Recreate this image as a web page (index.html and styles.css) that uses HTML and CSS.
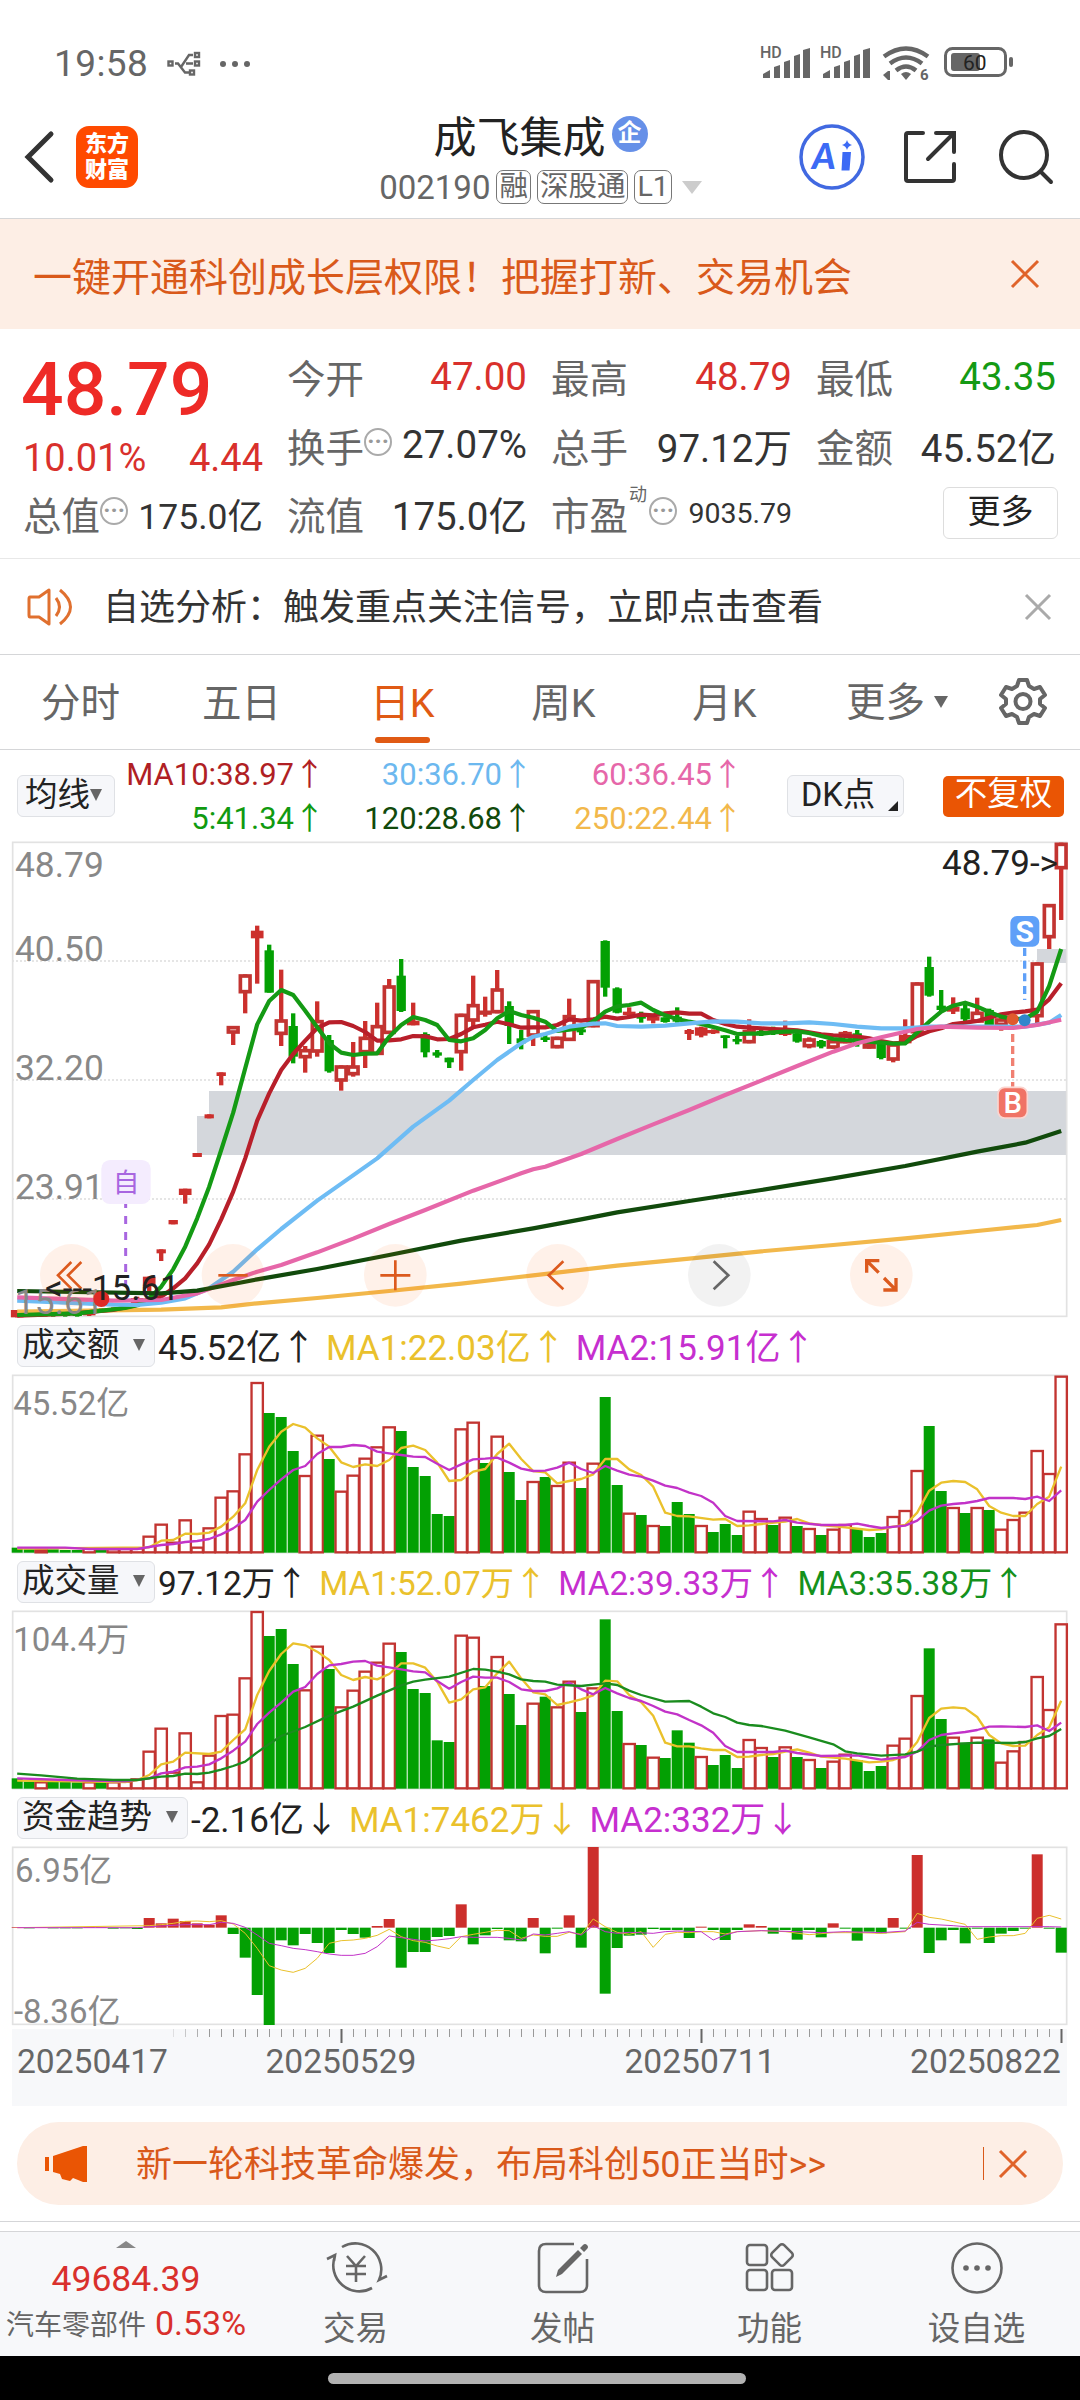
FILE: index.html
```html
<!DOCTYPE html>
<html lang="zh-CN">
<head>
  <meta charset="UTF-8">
  <title>成飞集成 002190</title>
  <link rel="stylesheet" href="styles.css">
</head>
<body>

  <div class="statusbar">
    <span class="time">19:58</span>
    <svg class="usb" width="34" height="26" viewBox="0 0 34 26">
      <g fill="none" stroke="#666" stroke-width="2.4">
        <rect x="1.5" y="10.5" width="4" height="4"/>
        <rect x="28" y="2" width="4" height="4"/>
        <rect x="28" y="10.5" width="4" height="4"/>
        <rect x="23" y="19.500" width="4" height="4"/>
        <path d="M8 12.500h3l7 9h4M14 16l8-12h4M19 12.500h7"/>
      </g>
    </svg>
    <span class="dots"><i></i><i></i><i></i></span>
    <span class="spacer"></span>
    <svg width="282" height="38" viewBox="0 0 282 38">
      <g fill="#666">
        <text class="hd" x="0" y="13">HD</text>
        <path d="M3 33v-4l7-4v8zM14 33V22l6-2v13zM24 33V17l6-2v18zM34 33V11l6-2v24zM43 33V5l7-2v30z"/>
        <text class="hd" x="60" y="13">HD</text>
        <path d="M63 33v-4l7-4v8zM74 33V22l6-2v13zM84 33V17l6-2v18zM94 33V11l6-2v24zM103 33V5l7-2v30z"/>
        <path d="M141 29q5-4 10 0l-5 6z"/>
        <path d="M123 30l5-4v9zM128 26h2v9h-2z"/>
        <text class="six" x="160" y="35">6</text>
        <rect x="191" y="8" width="29" height="18" rx="3"/>
        <rect x="249" y="12" width="4" height="10" rx="2"/>
      </g>
      <g fill="none" stroke="#666">
        <path d="M124 11.500q22-16 44 0M130 18.500q16-12 32 0M136 25.500q10-8 20 0" stroke-width="4.500"/>
        <rect x="185.500" y="3.500" width="60" height="27" rx="7" stroke-width="3"/>
      </g>
      <text class="batt" x="203" y="25">60</text>
    </svg>
  </div>

  <div class="header">
    <svg class="back" width="30" height="52" viewBox="0 0 30 52"><path d="M26 3 3 26 26 49" fill="none" stroke="#333" stroke-width="5" stroke-linecap="round"/></svg>
    <div class="logo">东方<br>财富</div>
    <div class="title">
      <div class="name">成飞集成<span class="badge">企</span></div>
      <div class="code">002190<span class="tag">融</span><span class="tag">深股通</span><span class="tag">L1</span><span class="caret"></span></div>
    </div>
    <svg width="66" height="66" viewBox="0 0 66 66">
      <circle cx="33" cy="33" r="31" fill="none" stroke="#4169e1" stroke-width="3.500"/>
      <text class="ai" x="13" y="45">A</text>
      <path d="M43.500 28h8.500l-1.500 18.500h-8zM48 16q1 4 5 5-4 1-5 5-1-4-5-5 4-1 5-5z" fill="#3c6af5"/>
    </svg>
    <svg class="share" width="54" height="54" viewBox="0 0 54 54">
      <path d="M20 3H5q-2 0-2 2v44q0 2 2 2h44q2 0 2-2V34M33 3h18v19M50 4 25 29" fill="none" stroke="#333" stroke-width="4" stroke-linecap="round"/>
    </svg>
    <svg class="search" width="54" height="54" viewBox="0 0 54 54">
      <circle cx="25" cy="25" r="23" fill="none" stroke="#333" stroke-width="4"/>
      <path d="M42 42l10 10" stroke="#333" stroke-width="4" stroke-linecap="round"/>
    </svg>
  </div>

  <div class="promo">
    <span>一键开通科创成长层权限！把握打新、交易机会</span>
    <svg width="30" height="30" viewBox="0 0 30 30"><path d="M2 2l26 26M28 2 2 28" stroke="#e0632a" stroke-width="3"/></svg>
  </div>

  <div class="quote">
    <div class="price">
      <div class="last">48.79</div>
      <div class="change"><span>10.01%</span><span>4.44</span></div>
    </div>
    <div class="cell"><label>今开</label><b class="up">47.00</b></div>
    <div class="cell"><label>最高</label><b class="up">48.79</b></div>
    <div class="cell"><label>最低</label><b class="down">43.35</b></div>
    <div class="cell"><label>换手<em class="info">···</em></label><b>27.07%</b></div>
    <div class="cell"><label>总手</label><b>97.12万</b></div>
    <div class="cell"><label>金额</label><b>45.52亿</b></div>
    <div class="cell"><label>总值<em class="info">···</em></label><b class="cap">175.0亿</b></div>
    <div class="cell"><label>流值</label><b>175.0亿</b></div>
    <div class="cell"><label>市盈<sup>动</sup><em class="info">···</em></label><b class="small">9035.79</b></div>
    <div class="cell end"><span class="more">更多</span></div>
  </div>

  <div class="notice">
    <svg width="48" height="40" viewBox="0 0 48 40">
      <g fill="none" stroke="#e0702f" stroke-width="3" stroke-linejoin="round">
        <path d="M3 10h9l10-7v34l-10-7H3q-1 0-1-2V12q0-2 1-2z"/>
        <path d="M29 11q7 9 0 18M33 3q21 17 0 34"/>
      </g>
    </svg>
    <span>自选分析：触发重点关注信号，立即点击查看</span>
    <svg width="28" height="28" viewBox="0 0 28 28"><path d="M2 2l24 24M26 2 2 26" stroke="#aaa" stroke-width="3"/></svg>
  </div>

  <div class="tabs">
    <span>分时</span>
    <span>五日</span>
    <span class="active">日K</span>
    <span>周K</span>
    <span>月K</span>
    <span class="drop">更多<i class="tri"></i></span>
    <svg width="48" height="48" viewBox="0 0 48 48">
      <g fill="none" stroke="#666" stroke-width="4" stroke-linejoin="round">
        <path d="M20 3h8l2 6 5 3 6-2 5 8-5 4v5l5 4-5 8-6-2-5 3-2 6h-8l-2-6-5-3-6 2-5-8 5-4v-5l-5-4 5-8 6 2 5-3z"/>
        <circle cx="24" cy="24.500" r="7.500"/>
      </g>
    </svg>
  </div>

  <div class="maline">
    <span class="chip">均线<i class="tri"></i></span>
    <div class="mas">
      <span class="c10">MA10:38.97↑</span><span class="c30">30:36.70↑</span><span class="c60">60:36.45↑</span>
      <span class="c5">5:41.34↑</span><span class="c120">120:28.68↑</span><span class="c250">250:22.44↑</span>
    </div>
    <span class="chip dk">DK点<i class="corner"></i></span>
    <span class="fq">不复权</span>
  </div>

  <svg id="kline" class="panel k" viewBox="0 36 3168 1425"></svg>

  <div class="legend">
    <span class="chip">成交额<i class="tri"></i></span>
    <span>45.52亿↑</span><span class="y">MA1:22.03亿↑</span><span class="m">MA2:15.91亿↑</span>
  </div>
  <svg id="amount" class="panel" viewBox="0 195 3168 534"></svg>

  <div class="legend vol">
    <span class="chip">成交量<i class="tri"></i></span>
    <span>97.12万↑</span><span class="y">MA1:52.07万↑</span><span class="m">MA2:39.33万↑</span><span class="g">MA3:35.38万↑</span>
  </div>
  <svg id="volume" class="panel" viewBox="0 903 3168 534"></svg>

  <div class="legend fund">
    <span class="chip">资金趋势<i class="tri"></i></span>
    <span>-2.16亿↓</span><span class="y">MA1:7462万↓</span><span class="m">MA2:332万↓</span>
  </div>
  <svg id="fund" class="panel" viewBox="0 201 3168 534"></svg>
  <svg id="axis" class="axis" viewBox="0 0 1056 77"></svg>

  <div class="pill">
    <svg width="42" height="38" viewBox="0 0 42 38"><path d="M0 12h4v14H0zM8 11 38 1h4v36h-4l-10-4-3 3-8-2-2-5-7-2z" fill="#ea5504"/></svg>
    <span>新一轮科技革命爆发，布局科创50正当时&gt;&gt;</span>
    <i class="bar"></i>
    <svg width="30" height="30" viewBox="0 0 30 30"><path d="M2 2l26 26M28 2 2 28" stroke="#e0632a" stroke-width="3"/></svg>
  </div>

  <div class="nav">
    <div class="index">
      <i class="uptri"></i>
      <div class="val">49684.39</div>
      <div class="sector">汽车零部件 <b>0.53%</b></div>
    </div>
    <div class="item">
      <svg width="60" height="56" viewBox="0 0 60 56">
        <g fill="none" stroke="#666" stroke-width="2.600">
          <path d="M16 7a26 26 0 0 1 37 33l8-4M46 48A26 26 0 0 1 9 16M1 19l8-4-1 6"/>
          <path d="M21 16l9 10 9-10M20 26h20M20 34h20M30 26v16"/>
        </g>
      </svg>
      交易
    </div>
    <div class="item">
      <svg width="52" height="56" viewBox="0 0 52 56">
        <path d="M37 4H9q-7 0-7 7v34q0 7 7 7h34q7 0 7-7V19" fill="none" stroke="#666" stroke-width="2.600"/>
        <path d="M19 37l2-7 20-20 4 4-20 20zM43 8l3-3q2-2 4 0t0 4l-3 3z" fill="#666"/>
      </svg>
      发帖
    </div>
    <div class="item">
      <svg width="50" height="56" viewBox="0 0 50 56">
        <g fill="none" stroke="#666" stroke-width="2.600">
          <rect x="2" y="5" width="20" height="20" rx="3"/>
          <rect x="2" y="30" width="20" height="20" rx="3"/>
          <rect x="27" y="30" width="20" height="20" rx="3"/>
          <rect x="28.500" y="6.500" width="17" height="17" rx="3" transform="rotate(45 37 15)"/>
        </g>
      </svg>
      功能
    </div>
    <div class="item">
      <svg width="52" height="56" viewBox="0 0 52 56">
        <circle cx="26" cy="28" r="24.500" fill="none" stroke="#666" stroke-width="2.600"/>
        <g fill="#666"><circle cx="15" cy="28" r="2.800"/><circle cx="26" cy="28" r="2.800"/><circle cx="37" cy="28" r="2.800"/></g>
      </svg>
      设自选
    </div>
  </div>
  <div class="homebar"><i></i></div>

  <script src="chart.js"></script>
</body>
</html>
```

FILE: styles.css
```css
* {
  box-sizing: border-box;
}
body {
  margin: 0;
  width: 1080px;
  background: #fff;
  font-family: Roboto, "Noto Sans CJK SC", sans-serif;
  color: #333;
}
svg {
  display: block;
  flex: none;
  overflow: visible;
}
i, em {
  font-style: normal;
}

/* status bar */
.statusbar {
  display: flex;
  align-items: center;
  height: 124px;
  padding: 3px 38px 0 54px;
  color: #666;
}
.time {
  font-size: 37px;
  letter-spacing: 0.4px;
}
.usb {
  margin-left: 19px;
}
.dots {
  display: flex;
  gap: 6px;
  margin-left: 19px;
}
.dots i {
  width: 6px;
  height: 6px;
  border-radius: 50%;
  background: #666;
}
.spacer {
  flex: 1;
}
.hd {
  font-size: 16px;
  font-weight: 500;
}
.six {
  font-size: 15px;
  font-weight: 700;
}
.batt {
  font-size: 21px;
  fill: #222;
}

/* header */
.header {
  display: flex;
  align-items: center;
  height: 95px;
  padding: 0 27px 29px 25px;
  border-bottom: 1px solid #d5d6d8;
}
.logo {
  width: 62px;
  height: 62px;
  margin-left: 21px;
  padding-top: 5px;
  border-radius: 13px;
  background: #ff4a00;
  color: #fff;
  font-size: 22px;
  font-weight: 900;
  line-height: 26px;
  text-align: center;
}
.title {
  flex: 1;
  margin: 9px 0 0 22px;
  padding-left: 122px;
  text-align: center;
}
.name {
  display: flex;
  align-items: center;
  justify-content: center;
  height: 52px;
  font-size: 43px;
  color: #222;
}
.badge {
  width: 36px;
  height: 36px;
  margin-left: 6px;
  border-radius: 50%;
  background: #6690e8;
  color: #fff;
  font-size: 24px;
  font-weight: 700;
  line-height: 35px;
}
.code {
  display: flex;
  align-items: center;
  justify-content: center;
  height: 54px;
  font-size: 33px;
  color: #666;
}
.tag {
  height: 34px;
  margin-left: 6px;
  padding: 0 2px;
  border: 1.5px solid #777;
  border-radius: 7px;
  font-size: 28.500px;
  line-height: 31px;
}
.caret {
  margin-left: 10px;
  border: 10px solid transparent;
  border-top: 13px solid #ccc;
  border-bottom: 0;
}
.ai {
  font-family: Lato, Roboto, sans-serif;
  font-size: 36px;
  font-style: italic;
  font-weight: 900;
  fill: #3c6af5;
}
.share {
  margin-left: 38px;
}
.search {
  margin-left: 42px;
}

.promo {
  display: flex;
  align-items: center;
  justify-content: space-between;
  height: 110px;
  padding: 0 40px 1px 33px;
  background: #fdeee5;
  color: #d9591a;
  font-size: 39px;
}

/* quote */
.quote {
  display: grid;
  grid-template-columns: 240px 240px 241px 240px;
  grid-auto-rows: 68.500px;
  align-content: start;
  column-gap: 24px;
  height: 230px;
  padding: 13px 0 0 23px;
  border-bottom: 1px solid #e8e8e8;
}
.price {
  grid-row: span 2;
  color: #ee2a26;
}
.last {
  height: 93px;
  margin-left: -2px;
  font-size: 75px;
  font-weight: 500;
  line-height: 94px;
}
.change {
  display: flex;
  justify-content: space-between;
  font-size: 38px;
  line-height: 46px;
  color: #d9302c;
}
.cell {
  display: flex;
  align-items: center;
  justify-content: space-between;
  white-space: nowrap;
}
.cell label {
  display: flex;
  align-items: center;
  color: #666;
  font-size: 38.500px;
}
.cell b {
  font-size: 38.500px;
  font-weight: 400;
}
.cell .up {
  color: #d9302c;
}
.cell .down {
  color: #149a14;
}
.cell .cap {
  font-size: 35.500px;
}
.cell .small {
  font-size: 28.500px;
}
.cell sup {
  align-self: flex-start;
  font-size: 18px;
  line-height: 20px;
  margin-left: 1px;
}
.cell sup + .info {
  margin-left: 2px;
}
.info {
  width: 28px;
  height: 28px;
  margin-top: -5px;
  border: 2px solid #aaa;
  border-radius: 50%;
  color: #999;
  font-size: 24px;
  font-weight: 700;
  line-height: 23px;
  text-align: center;
}
.cell.end {
  justify-content: flex-end;
}
.more {
  width: 115px;
  height: 52px;
  margin-right: -2px;
  border: 1px solid #ddd;
  border-radius: 6px;
  color: #222;
  font-size: 33px;
  line-height: 47px;
  text-align: center;
}

.notice {
  display: flex;
  align-items: center;
  height: 96px;
  padding: 0 28px 0 27px;
  border-bottom: 1px solid #d5d6d8;
  font-size: 36px;
}
.notice span {
  flex: 1;
  margin: -6px 0 0 28px;
}

/* period tabs */
.tabs {
  display: grid;
  grid-template-columns: repeat(6, 161px) 1fr;
  align-items: center;
  height: 95px;
  border-bottom: 1px solid #d5d6d8;
  color: #666;
  font-size: 39.500px;
}
.tabs span {
  position: relative;
  height: 92px;
  text-align: center;
  line-height: 95px;
}
.tabs svg {
  margin-left: 33px;
  margin-top: -3px;
}
.tabs .active {
  color: #e05a14;
}
.tabs .active::after {
  content: "";
  position: absolute;
  left: 53px;
  bottom: 5px;
  width: 55px;
  height: 6px;
  border-radius: 3px;
  background: #e05a14;
}
.tabs .drop {
  display: flex;
  align-items: center;
  justify-content: center;
  padding-left: 23px;
}
.tri {
  border: 6px solid transparent;
  border-top: 12px solid #666;
  border-bottom: 0;
}
.drop .tri {
  margin-left: 9px;
  border-width: 12px 7px 0;
}

/* chips and legends */
.chip {
  display: flex;
  align-items: center;
  height: 42px;
  padding: 0 6px 2px 4px;
  border: 1px solid #dfe1e5;
  border-radius: 6px;
  background: #f6f7fa;
  color: #222;
  font-size: 32.500px;
  line-height: 38px;
}
.maline {
  display: flex;
  align-items: center;
  height: 92px;
  padding-left: 17px;
}
.maline .chip {
  width: 98px;
  padding-left: 7px;
}
.mas {
  display: grid;
  grid-template-columns: 210px 208px 210px;
  grid-auto-rows: 44px;
  margin: 2px 1px 0 0;
  line-height: 44px;
  font-size: 31px;
  text-align: right;
}
.c10 { color: #b01f24; }
.c30 { color: #6cb8ef; }
.c60 { color: #e667a9; }
.c5 { color: #109a10; }
.c120 { color: #114a0c; }
.c250 { color: #f2b84b; }
.maline .dk {
  position: relative;
  width: 117px;
  margin-left: 43px;
  padding-left: 13px;
}
.corner {
  position: absolute;
  right: 5px;
  bottom: 5px;
  border: 5px solid #222;
  border-top-color: transparent;
  border-left-color: transparent;
}
.fq {
  width: 121px;
  height: 41px;
  margin-left: 39px;
  border-radius: 5px;
  background: #ea5504;
  color: #fff;
  font-size: 32.500px;
  line-height: 37px;
  text-align: center;
}
.legend {
  display: flex;
  align-items: center;
  height: 58px;
  padding-left: 17px;
  color: #222;
  font-size: 35px;
  white-space: nowrap;
}
.legend > span + span {
  margin: -4px 0 0 10px;
}
.legend .chip {
  width: 138px;
  justify-content: space-between;
  padding-right: 9px;
}
.legend > .chip + span {
  margin-left: 3px;
}
.vol > span + span {
  margin-left: 11px;
  font-size: 33.300px;
}
.fund .chip {
  width: 171px;
}
.y { color: #eac12c; }
.m { color: #c62fcf; }
.g { color: #14911c; }

/* charts */
.panel {
  width: 1056px;
  height: 178px;
  margin-left: 12px;
}
.panel.k {
  height: 475px;
}
.frame {
  fill: none;
  stroke: #e2e2e2;
  stroke-width: 5;
}
.scale {
  font-size: 99px;
  fill: #888;
}
.k .scale {
  font-size: 106px;
}
.tip {
  font-size: 105px;
  fill: #222;
}
.grid {
  stroke: #ddd;
  stroke-width: 4;
  stroke-dasharray: 6 6;
}
.gap {
  fill: #d4d7dc;
}
.up-box {
  fill: #fff;
  stroke: #c23431;
}
.up-fill {
  fill: #cc2f2c;
}
.down-fill {
  fill: #03a003;
}
.ma {
  fill: none;
  stroke-linejoin: round;
}
.axis {
  width: 1056px;
  height: 77px;
  margin: 4px 0 0 12px;
}
.axis text {
  font-size: 33.600px;
  fill: #666;
}

.pill {
  display: flex;
  align-items: center;
  width: 1046px;
  height: 83px;
  margin: 16px 0 16px 17px;
  padding: 0 35px 0 28px;
  border-radius: 42px;
  background: #fdeee5;
  color: #d9591a;
  font-size: 36px;
}
.pill span {
  flex: 1;
  margin: -5px 0 0 49px;
}
.bar {
  width: 1px;
  height: 33px;
  margin-right: 14px;
  background: #d9591a;
}

/* bottom navigation */
.nav {
  display: grid;
  grid-template-columns: 252px repeat(4, 207px);
  height: 135px;
  padding-top: 11px;
  border-top: 1px solid #d5d6d8;
  background: linear-gradient(#fff 9px, #d5d6d8 9px, #d5d6d8 10px, #f7f8fa 10px);
  color: #666;
  font-size: 32.500px;
}
.index {
  display: flex;
  flex-direction: column;
  align-items: center;
  white-space: nowrap;
}
.uptri {
  margin-top: 8px;
  border: 10px solid transparent;
  border-bottom: 7px solid #888;
  border-top: 0;
}
.val {
  margin-top: 10px;
  color: #d9302c;
  font-size: 35.500px;
  line-height: 42px;
}
.sector {
  font-size: 28px;
  line-height: 46px;
}
.sector b {
  margin-left: 2px;
  color: #d9302c;
  font-size: 34px;
  font-weight: 400;
}
.item {
  display: flex;
  flex-direction: column;
  align-items: center;
  padding-top: 7px;
  line-height: 67px;
}
.homebar {
  height: 44px;
  padding-top: 17px;
  background: #000;
}
.homebar i {
  display: block;
  width: 418px;
  height: 11px;
  margin-left: 328px;
  border-radius: 6px;
  background: #b2b2b2;
}
```

FILE: chart.js
```js
// one bar every 12px, svg units are 1/3 px
const STEP = 36, X0 = 15.6, N = 88;
const cx = i => X0 + i * STEP;

// [index, type, high, bodyTop, bodyBottom, low]  h: hollow, r: red, t: narrow red, g: green
const candles = [
  [0,'r',1440,1440,1462,1462],[1,'g',1452,1452,1460,1460],[2,'r',1452,1452,1460,1460],[3,'g',1450,1452,1458,1460],
  [4,'g',1450,1452,1458,1460],[5,'g',1450,1452,1458,1460],[6,'r',1446,1448,1456,1458],[7,'r',1434,1436,1446,1448],
  [8,'r',1432,1434,1444,1446],[9,'r',1428,1430,1438,1440],[10,'r',1400,1404,1420,1424],
  [11,'r',1340,1340,1368,1385],[12,'t',1258,1258,1270,1293],[13,'t',1170,1170,1183,1183],[14,'r',1076,1076,1095,1121],
  [15,'t',969,969,981,981],[16,'t',853,853,865,865],[17,'t',727,727,738,766],[18,'h',588,588,611,645],
  [19,'h',433,433,490,550],[20,'r',287,302,325,461],[21,'g',344,361,488,488],[22,'h',419,568,615,648],
  [23,'g',550,588,680,700],[24,'h',648,657,685,728],[25,'h',514,570,668,680],[26,'g',615,630,724,728],
  [27,'h',706,706,755,782],[28,'h',636,706,736,740],[29,'h',573,620,670,714],[30,'h',518,585,675,675],
  [31,'h',447,466,612,612],[32,'g',387,437,543,546],[33,'r',518,572,586,586],[34,'g',607,612,667,682],
  [35,'g',660,667,677,683],[36,'g',683,683,697,714],[37,'h',551,551,670,722],[38,'h',437,522,575,590],
  [39,'h',500,542,554,560],[40,'h',420,475,550,550],[41,'g',514,528,588,642],[42,'g',600,625,640,658],
  [43,'h',540,540,620,648],[44,'g',615,622,630,636],[45,'h',620,620,655,655],[46,'h',506,555,633,633],
  [47,'g',590,598,607,615],[48,'h',450,450,592,592],[49,'g',331,333,473,500],[50,'g',472,475,548,550],
  [51,'r',532,545,555,560],[52,'g',545,558,566,578],[53,'r',556,560,572,580],[54,'g',562,562,576,578],
  [55,'g',532,560,575,578],[56,'t',597,600,612,630],[57,'r',590,592,617,622],[58,'r',598,600,610,612],
  [59,'g',616,616,624,655],[60,'g',618,627,635,643],[61,'h',568,600,640,640],[62,'g',600,603,614,618],
  [63,'g',590,600,608,615],[64,'r',572,603,615,618],[65,'g',606,610,635,638],[66,'h',622,625,652,655],
  [67,'g',630,633,650,655],[68,'h',628,630,656,656],[69,'h',603,606,640,640],[70,'g',600,610,640,650],
  [71,'h',632,640,656,656],[72,'g',640,640,684,688],[73,'h',640,640,692,697],[74,'r',568,615,640,640],
  [75,'h',457,457,610,610],[76,'g',380,411,497,500],[77,'g',480,527,540,545],[78,'r',502,530,545,552],
  [79,'g',525,535,568,573],[80,'h',503,545,578,578],[81,'g',536,540,587,590],[82,'h',560,565,588,602],
  [85,'h',397,397,562,580],[86,'h',222,222,325,357],[87,'h',38,38,118,270]
];

const kma = [
  ['#f2b84b', '0,1445 12,1439 17,1432 20,1420 25,1404 31,1383 37,1361 43,1336 50,1307 56,1286 62,1264 68,1245 74,1225 80,1203 85,1185 87,1170'],
  ['#b81f2a', '0,1457 4,1452 8,1440 10,1425 11,1408 12,1400 13,1375 14,1345 15,1300 16,1243 17,1168 18,1085 19,985 20,872 21,790 22,720 23,672 24,632 25,594 26,577 27,576 28,588 29,606 30,632 31,631 32,628 33,618 34,619 35,628 36,627 37,612 38,592 39,584 40,575 41,583 42,593 43,592 44,592 45,585 46,568 47,572 48,568 49,560 50,566 51,561 52,554 53,556 54,550 55,547 56,551 57,551 58,570 59,582 60,590 61,593 62,595 63,597 64,599 65,601 66,607 67,613 68,616 69,618 70,620 71,625 72,633 73,640 74,638 75,618 76,604 77,595 78,582 79,578 80,573 81,563 82,553 83,548 84,544 85,539 86,508 87,460'],
  ['#149a14', '0,1455 5,1450 8,1438 9,1434 10,1426 11,1405 12,1370 13,1318 14,1250 15,1165 16,1070 17,960 18,848 19,715 20,583 21,513 22,480 23,495 24,542 25,592 26,640 27,668 28,675 29,671 30,670 31,620 32,585 33,561 34,570 35,585 36,630 37,634 38,625 39,600 40,565 41,543 42,555 43,563 44,575 45,603 46,599 47,594 48,574 49,545 50,529 51,525 52,518 53,540 54,556 55,567 56,575 57,582 58,591 59,601 60,612 61,611 62,611 63,607 64,605 65,604 66,609 67,618 68,627 69,630 70,632 71,635 72,638 73,641 74,640 75,608 76,575 77,545 78,527 79,518 80,530 81,546 82,560 83,567 84,566 85,545 86,468 87,357'],
  ['#6ebcf4', '0,1412 8,1424 10,1425 12,1418 14,1405 16,1375 18,1325 20,1258 22,1197 25,1112 30,985 33,890 36,812 38,750 40,690 42,640 43,620 44,612 46,590 48,581 49,580 50,588 52,590 54,587 56,580 58,574 60,575 62,580 64,580 66,577 68,582 70,590 72,595 74,595 76,590 82,590 84,590 86,578 87,555'],
  ['#e667a9', '0,1402 8,1412 12,1410 15,1390 18,1350 20,1325 22,1305 25,1267 28,1226 31,1182 34,1140 38,1082 42,1030 43,1018 44,1010 47,972 50,927 53,883 56,840 59,795 62,752 65,708 68,665 70,640 72,622 75,597 77,590 80,593 83,594 85,585 87,569'],
  ['#114a0c', '0,1383 12,1390 15,1382 18,1362 20,1348 25,1317 31,1275 37,1232 43,1195 47,1168 50,1147 56,1113 62,1080 68,1045 74,1008 80,965 84,938 87,903']
];

const colors = 'ggrgggrgrrrrrrrrrrrrrgggrrgrrrrrggggg' + 'rrgrggrgrrgrggrgrgggrggg' + 'rrgrgrgrrgggrrrggrgrgrrrrrr';

const amount = [713,718,718,718,720,720,712,720,715,714,712,677,641,695,628,710,652,560,541,430,216,309,321,423,495,374,447,542,494,443,409,349,363,471,498,612,618,355,335,459,377,486,570,513,501,525,455,534,458,261,525,608,615,645,648,576,612,645,666,642,675,602,624,645,620,648,654,675,656,642,655,681,669,618,600,480,348,543,591,609,591,600,656,627,605,420,489,197];
const volume = [1405,1415,1414,1415,1415,1417,1414,1416,1414,1412,1405,1322,1253,1385,1267,1414,1334,1215,1211,1102,903,978,957,1062,1138,1007,1077,1189,1139,1082,1055,998,1026,1137,1149,1291,1296,974,980,1128,1038,1152,1245,1178,1160,1189,1112,1206,1132,928,1203,1299,1305,1340,1344,1261,1298,1338,1365,1335,1374,1287,1311,1341,1309,1341,1347,1374,1352,1331,1350,1383,1368,1304,1283,1155,1015,1227,1280,1298,1280,1288,1355,1321,1293,1098,1197,940];
const fund = [441,445,441,445,445,445,441,441,446,445,447,414,430,416,423,430,434,406,462,533,645,735,481,496,462,489,519,450,462,473,438,417,563,516,516,471,468,373,493,466,447,481,484,414,520,446,406,503,201,641,504,467,464,447,450,450,474,440,450,480,450,433,438,461,450,479,450,472,430,446,482,455,460,414,446,225,519,481,450,490,446,489,461,453,446,223,446,518];

const ama = [
  ['#eac12c', '0,716 11,712 12,692 13,690 14,671 15,672 16,668 17,650 18,620 19,580 20,480 21,410 22,365 23,342 24,353 25,385 26,410 27,457 28,471 29,463 30,468 31,450 32,414 33,407 34,420 35,458 36,513 37,510 38,485 39,477 40,432 41,401 42,447 43,483 44,487 45,520 46,513 47,507 48,493 49,447 50,447 51,478 52,495 53,530 54,608 55,618 56,619 58,629 59,627 60,648 61,646 62,642 64,635 65,627 66,640 67,645 69,652 71,660 72,658 73,650 74,645 75,608 76,542 77,518 78,513 79,516 80,538 81,588 82,608 83,618 84,618 85,582 86,560 87,470'],
  ['#c233c8', '0,713 4,713 6,717 10,717 12,705 13,702 14,696 15,693 16,687 17,673 18,655 19,630 20,575 21,540 22,508 23,480 24,468 25,432 26,411 27,411 28,405 29,408 30,425 31,430 32,435 33,440 34,441 35,461 36,480 37,463 38,448 39,446 40,443 41,458 42,476 43,483 44,482 45,473 46,458 47,477 48,489 49,468 50,482 51,494 52,500 53,512 54,527 55,534 56,548 57,558 58,578 59,618 60,633 63,634 64,630 65,638 67,645 69,645 70,641 71,648 72,654 74,647 75,632 76,602 77,587 78,582 79,579 80,573 81,564 83,564 84,567 85,560 86,573 87,541']
];
const vma = [
  ['#eac12c', '0,1412 9,1416 10,1410 11,1395 12,1363 13,1355 14,1328 16,1332 17,1325 18,1290 19,1258 20,1155 21,1083 22,1032 23,1000 24,1006 25,1025 26,1050 27,1095 28,1110 29,1101 30,1108 31,1092 32,1060 33,1060 34,1073 35,1115 36,1178 37,1168 38,1138 39,1132 40,1090 41,1055 42,1105 43,1147 44,1153 45,1185 46,1177 47,1168 48,1156 49,1112 50,1114 51,1155 52,1177 53,1217 54,1298 55,1309 56,1309 57,1315 58,1320 59,1320 60,1341 61,1340 62,1335 63,1332 64,1325 65,1318 66,1328 67,1340 69,1346 71,1357 72,1355 73,1350 74,1338 75,1296 76,1224 77,1196 78,1192 79,1195 80,1221 81,1275 82,1300 83,1308 84,1307 85,1275 86,1252 87,1172'],
  ['#c233c8', '0,1405 4,1410 8,1413 9,1414 11,1405 12,1390 13,1385 14,1372 15,1370 16,1363 17,1345 18,1322 19,1295 20,1242 21,1208 22,1178 23,1145 24,1131 25,1092 26,1066 27,1062 28,1055 29,1053 30,1067 31,1072 32,1078 33,1084 34,1087 35,1113 36,1136 37,1116 38,1100 39,1103 40,1103 41,1116 42,1138 43,1143 44,1143 45,1135 46,1118 47,1138 48,1153 49,1134 50,1150 51,1164 52,1173 53,1188 54,1205 55,1213 56,1230 57,1246 58,1268 59,1308 60,1326 63,1326 64,1322 65,1329 67,1338 70,1336 71,1343 72,1349 74,1341 75,1325 76,1290 77,1275 78,1270 79,1266 80,1260 81,1250 82,1249 84,1251 85,1246 86,1263 87,1238'],
  ['#1a8c1e', '0,1391 2,1396 5,1406 8,1410 10,1410 12,1400 13,1398 14,1391 15,1392 16,1388 17,1379 18,1368 19,1355 20,1327 21,1302 22,1278 24,1251 26,1217 28,1190 30,1157 32,1126 33,1115 34,1109 36,1100 38,1077 39,1079 40,1085 41,1093 42,1108 43,1113 44,1115 45,1124 47,1128 48,1124 49,1120 50,1125 51,1142 52,1155 54,1175 56,1173 57,1190 58,1210 59,1221 60,1238 61,1245 62,1248 64,1262 66,1282 68,1303 69,1324 70,1330 72,1337 74,1333 75,1325 76,1310 77,1305 79,1300 80,1298 83,1299 84,1296 85,1285 86,1278 87,1257']
];
const fma = [
  ['#eac12c', '0,443 11,437 12,434 13,430 14,424 15,423 16,425 17,422 18,432 19,460 20,505 21,557 22,570 23,577 24,565 25,535 26,490 27,482 28,480 29,475 30,466 31,448 32,470 33,482 34,487 35,498 36,506 37,470 38,463 39,457 40,451 41,452 42,475 43,465 44,469 45,469 46,457 47,463 48,417 49,440 50,457 51,463 52,455 53,502 54,463 55,457 56,458 57,455 58,455 59,462 60,455 62,452 64,455 66,464 68,458 70,458 72,460 74,455 75,400 76,412 77,417 78,425 79,433 80,478 81,471 82,467 83,467 84,460 85,415 86,406 87,417'],
  ['#c233c8', '0,443 10,443 12,438 14,434 16,434 17,427 18,430 19,442 20,465 21,490 22,497 23,505 24,509 25,515 26,522 27,526 28,526 29,520 30,500 31,468 32,473 33,478 34,483 35,480 36,476 37,470 38,472 40,472 41,475 42,480 43,462 44,465 45,460 46,455 47,465 48,437 49,455 50,460 51,457 53,460 54,455 55,453 57,455 58,480 59,465 60,455 62,452 65,455 67,458 69,455 72,458 74,453 75,427 76,433 78,437 79,440 82,440 86,440 87,441']
];

const rect = (c, x, y, w, h, extra = '') => `<rect class="${c}" x="${x}" y="${y}" width="${w}" height="${h}" ${extra}/>`;
const text = (c, x, y, s, extra = '') => `<text class="${c}" x="${x}" y="${y}" ${extra}>${s}</text>`;

function lines(list, width) {
  return list.map(([color, pts]) => {
    const p = pts.split(' ').map(s => {
      const [i, y] = s.split(',');
      return cx(+i) + ',' + y;
    });
    return `<polyline class="ma" stroke="${color}" stroke-width="${width}" points="${p.join(' ')}"/>`;
  }).join('');
}

function drawKline() {
  let s = '';
  for (const y of [393, 750, 1107]) s += `<path class="grid" d="M0 ${y}H3165"/>`;
  s += rect('gap', 591, 783, 2574, 76) + rect('gap', 555, 858, 2610, 117) + rect('gap', 3075, 357, 90, 42);
  s += rect('frame', 2, 37, 3162, 1422);

  for (const [i, type, hi, top, bot, lo] of candles) {
    const x = cx(i), fill = type === 'g' ? 'down-fill' : 'up-fill';
    s += rect(fill, x - 6.5, hi, 13, lo - hi);
    if (type === 'h') {
      s += rect('up-box', x - 14.5, top + 5, 29, Math.max(bot - top - 10, 2), 'stroke-width="11"');
    } else {
      const w = type === 'r' ? 38 : 28;
      s += rect(fill, x - w / 2, top, w, bot - top);
    }
  }
  s += lines(kma, 12.5);
  s += text('scale', 9, 140, '48.79') + text('scale', 9, 393, '40.50') + text('scale', 9, 750, '32.20')
     + text('scale', 9, 1106, '23.91') + text('scale', 9, 1453, '15.61');
  s += `<circle cx="268" cy="1407" r="24" fill="#e02a26"/>`;

  // markers
  s += rect('', 268, 990, 148, 132, 'rx="26" fill="#f4ecfe"') + text('', 342, 1086, '自', 'font-size="80" text-anchor="middle" fill="#a866e0"');
  s += `<path d="M341 1122V1370" stroke="#a866e0" stroke-width="9" stroke-dasharray="24 24" stroke-dashoffset="12"/>`;
  s += `<circle cx="3002" cy="568" r="18" fill="#e05a2c"/><circle cx="3038" cy="571" r="18" fill="#3286cc"/>`;
  s += rect('', 2995, 258, 87, 92, 'rx="20" fill="#5fa0f8"') + text('', 3038, 336, 'S', 'font-size="90" font-weight="700" text-anchor="middle" fill="#fff"');
  s += `<path d="M3038 354V510" stroke="#5fa0f8" stroke-width="10" stroke-dasharray="24 14"/>`;
  s += `<path d="M3002 612V770" stroke="#f08072" stroke-width="10" stroke-dasharray="24 12"/>`;
  s += rect('', 2958, 772, 88, 92, 'rx="20" fill="#f07365" stroke="#fbd5d0" stroke-width="5"') + text('', 3002, 850, 'B', 'font-size="88" font-weight="500" text-anchor="middle" fill="#fff"');

  // round buttons
  const icons = [
    [178, 'M0-40-40 0 0 40M30-40-10 0 30 40'],
    [663, 'M-44 0H44'],
    [1150, 'M-45 0H45M0-45V45'],
    [1637, 'M17-42-27 0 17 42'],
    [2122, 'M-17-42 27 0-17 42'],
    [2608, 'M-44-8V-44H-6M-42-42-8-8M44 8V44H6M42 42 8 8']
  ];
  icons.forEach(([x, d], n) => {
    const gray = n === 4;
    s += `<circle cx="${x}" cy="1336" r="94" fill="${gray ? '#000' : '#ff5a00'}" fill-opacity="${gray ? .05 : .085}"/>`;
    s += `<path transform="translate(${x} 1336)" d="${d}" fill="none" stroke="${gray ? '#666' : '#dc5a1e'}" stroke-width="${n === 5 ? 10 : 8}"/>`;
  });
  s += text('tip', 2790, 135, '48.79-&gt;') + text('tip', 99, 1411, '&lt;---15.61');
  document.getElementById('kline').innerHTML = s;
}

function drawBars(id, data, base, ma, label, labelY) {
  let s = rect('frame', 2, base - 532, 3162, 532);
  data.forEach((y, i) => {
    const x = cx(i);
    if (colors[i] === 'g') s += rect('down-fill', x - 16.5, y, 33, base - y);
    else s += rect('up-box', x - 17, y + 3, 34, base - y - 4, 'stroke-width="7"');
  });
  s += lines(ma, 7) + text('scale', 4, labelY, label);
  document.getElementById(id).innerHTML = s;
}

function drawFund() {
  let s = rect('frame', 2, 202, 3162, 531);
  fund.forEach((y, i) => {
    const up = y < 443;
    s += rect(up ? 'up-fill' : 'down-fill', cx(i) - 16.5, Math.min(y, 443), 33, Math.abs(443 - y));
  });
  s += lines(fma, 3) + text('scale', 9, 306, '6.95亿') + text('scale', 6, 730, '-8.36亿');
  document.getElementById('fund').innerHTML = s;
}

function drawAxis() {
  let s = '<rect width="1055" height="77" fill="#f7f8fa"/>';
  for (let i = 13; i < N; i++) {
    const major = i % 30 === 27, x = 5.5 + i * 12;
    s += `<path d="M${x} 0V${major ? 14 : 8}" stroke="${major ? '#666' : '#999'}" stroke-width="${major ? 2 : 1}" opacity="${i < 16 ? (i - 12) * .25 : 1}"/>`;
  }
  s += text('', 5, 44, '20250417') + text('', 329, 44, '20250529', 'text-anchor="middle"')
     + text('', 688, 44, '20250711', 'text-anchor="middle"') + text('', 1049, 44, '20250822', 'text-anchor="end"');
  document.getElementById('axis').innerHTML = s;
}

drawKline();
drawBars('amount', amount, 728, ama, '45.52亿', 314);
drawBars('volume', volume, 1436, vma, '104.4万', 1022);
drawFund();
drawAxis();
```
